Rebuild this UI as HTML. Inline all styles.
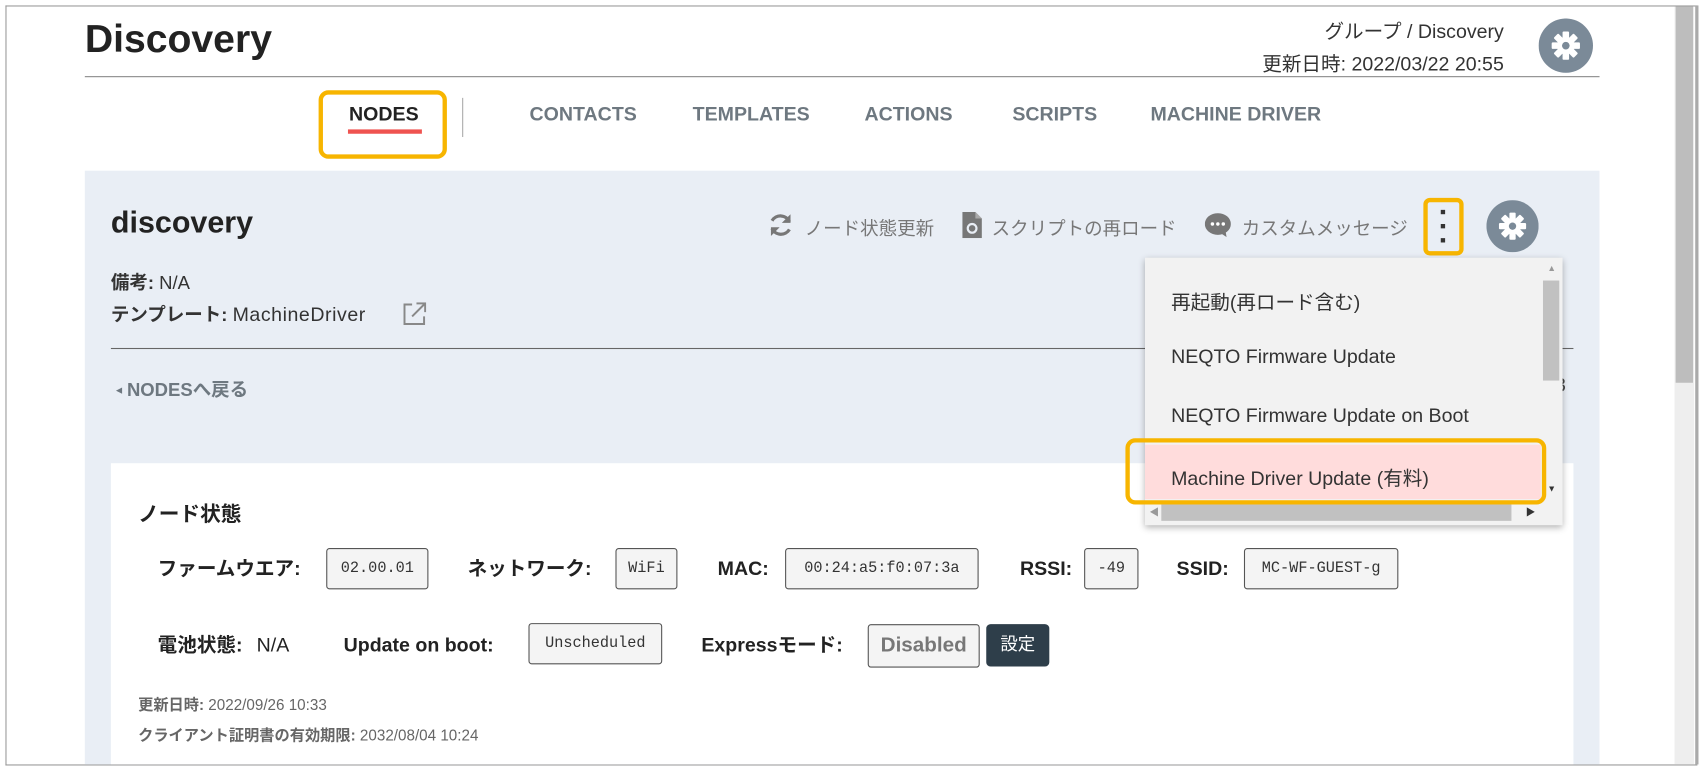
<!DOCTYPE html>
<html><head><meta charset="utf-8"><style>
html,body{margin:0;padding:0;width:1705px;height:770px;overflow:hidden;background:#fff}
#s{position:absolute;left:0;top:0;width:1568px;height:708px;transform:scale(1.08737);transform-origin:0 0;font-family:"Liberation Sans","Noto Sans CJK JP",sans-serif;color:#333}
.a{position:absolute;white-space:nowrap}
.b{font-weight:bold}
.tab{position:absolute;top:95px;font-size:18px;font-weight:bold;color:#6e7880}
.box{position:absolute;border:1px solid #555;border-radius:3px;background:#f4f4f4;font-family:"Liberation Mono",monospace;font-size:14px;color:#333;text-align:center;line-height:36px;height:36px}
.lbl{position:absolute;font-size:18px;font-weight:bold;color:#222;line-height:38px;height:38px}
.act{position:absolute;top:196px;font-size:17px;color:#777}
.item{position:absolute;left:1077px;font-size:18px;color:#333}
</style></head><body><div id="s">
<div class="a" style="left:5px;top:5px;width:1555px;height:697px;border:1px solid #999;border-right:none"></div>
<div class="a" style="left:1540px;top:6px;width:18px;height:697px;background:#eee"></div>
<div class="a" style="left:1541px;top:6px;width:16px;height:346px;background:#bdbdbd"></div>
<div class="a" style="left:1559px;top:5px;width:3px;height:698px;background:#aaa"></div>

<div class="a b" style="left:78px;top:15px;font-size:36px;color:#222">Discovery</div>
<div class="a" style="right:185px;top:15px;font-size:18px;color:#333">グループ / Discovery</div>
<div class="a" style="right:185px;top:45px;font-size:18px;color:#333">更新日時: 2022/03/22 20:55</div>
<svg class="a" style="left:1415px;top:17px" width="50" height="50" viewBox="0 0 50 50"><circle cx="25" cy="25" r="25" fill="#7b8a98"/><g fill="#fff" transform="translate(25 25)"><circle r="8"/><g id="t"><rect x="-3" y="-13" width="6" height="7" rx="1"/></g><use href="#t" transform="rotate(45)"/><use href="#t" transform="rotate(90)"/><use href="#t" transform="rotate(135)"/><use href="#t" transform="rotate(180)"/><use href="#t" transform="rotate(225)"/><use href="#t" transform="rotate(270)"/><use href="#t" transform="rotate(315)"/><circle r="3.5" fill="#7b8a98"/></g></svg>
<div class="a" style="left:78px;top:70px;width:1393px;height:1px;background:#888"></div>

<div class="tab" style="left:321px;color:#222">NODES</div>
<div class="a" style="left:320px;top:119px;width:68px;height:4px;background:#ef5350"></div>
<div class="a" style="left:293px;top:83px;width:110px;height:55px;border:4px solid #f7b500;border-radius:9px"></div>
<div class="a" style="left:425px;top:90px;width:1px;height:36px;background:#aaa"></div>
<div class="tab" style="left:487px">CONTACTS</div>
<div class="tab" style="left:637px">TEMPLATES</div>
<div class="tab" style="left:795px">ACTIONS</div>
<div class="tab" style="left:931px">SCRIPTS</div>
<div class="tab" style="left:1058px">MACHINE DRIVER</div>

<div class="a" style="left:78px;top:157px;width:1393px;height:546px;background:#e9eef5"></div>
<div class="a b" style="left:102px;top:189px;font-size:28px;color:#222">discovery</div>
<svg class="a" style="left:706px;top:195px" width="24" height="24" viewBox="0 0 24 24"><path d="M20 9A9 9 0 0 0 4 8M4 15a9 9 0 0 0 16 1" stroke="#777" stroke-width="3" fill="none"/><path d="M21 2v8h-8zM3 22v-8h8z" fill="#777"/></svg>
<div class="act" style="left:740px">ノード状態更新</div>
<svg class="a" style="left:885px;top:195px" width="18" height="24" viewBox="0 0 18 24"><path d="M0 0h12l6 6v18H0z" fill="#777"/><path d="M12 0v6h6" fill="#aaa"/><circle cx="9" cy="15" r="4" stroke="#e9eef5" stroke-width="2" fill="none"/></svg>
<div class="act" style="left:912px">スクリプトの再ロード</div>
<svg class="a" style="left:1108px;top:196px" width="24" height="22" viewBox="0 0 24 22"><ellipse cx="12" cy="10" rx="12" ry="10" fill="#777"/><path d="M14 18l6 4-1-6z" fill="#777"/><circle cx="7" cy="10" r="1.6" fill="#fff"/><circle cx="12" cy="10" r="1.6" fill="#fff"/><circle cx="17" cy="10" r="1.6" fill="#fff"/></svg>
<div class="act" style="left:1142px">カスタムメッセージ</div>
<div class="a" style="left:1309px;top:182px;width:29px;height:45px;border:4px solid #f7b500;border-radius:6px"></div>
<div class="a" style="left:1325px;top:193px;width:4px;height:4px;background:#333"></div>
<div class="a" style="left:1325px;top:206px;width:4px;height:4px;background:#333"></div>
<div class="a" style="left:1325px;top:219px;width:4px;height:4px;background:#333"></div>
<svg class="a" style="left:1367px;top:184px" width="48" height="48" viewBox="0 0 50 50"><circle cx="25" cy="25" r="25" fill="#7b8a98"/><g fill="#fff" transform="translate(25 25)"><circle r="8"/><use href="#t"/><use href="#t" transform="rotate(45)"/><use href="#t" transform="rotate(90)"/><use href="#t" transform="rotate(135)"/><use href="#t" transform="rotate(180)"/><use href="#t" transform="rotate(225)"/><use href="#t" transform="rotate(270)"/><use href="#t" transform="rotate(315)"/><circle r="3.5" fill="#7b8a98"/></g></svg>

<div class="a" style="left:102px;top:246px;font-size:17px"><b>備考:</b> N/A</div>
<div class="a" style="left:102px;top:275px;font-size:17px"><b>テンプレート:</b> <span style="letter-spacing:0.5px;font-size:18px">MachineDriver</span></div>
<svg class="a" style="left:370px;top:278px" width="22" height="22" viewBox="0 0 22 22"><path d="M9 2H2v18h18v-7M13 1h8v8M21 1L9 13" stroke="#888" stroke-width="1.8" fill="none"/></svg>
<div class="a" style="left:102px;top:320px;width:1345px;height:1px;background:#666"></div>
<div class="a b" style="left:107px;top:344px;font-size:17px;color:#6e7880"><span style="font-size:10px;vertical-align:2px">◂</span> NODESへ戻る</div>
<div class="a" style="left:1430px;top:344px;font-size:18px;color:#444">3</div>

<div class="a" style="left:102px;top:426px;width:1345px;height:277px;background:#fff"></div>
<div class="a b" style="left:127px;top:458px;font-size:19px;color:#222">ノード状態</div>
<div class="lbl" style="left:145px;top:504px">ファームウエア:</div><div class="box" style="left:300px;top:504px;width:92px">02.00.01</div>
<div class="lbl" style="left:430px;top:504px">ネットワーク:</div><div class="box" style="left:566px;top:504px;width:55px">WiFi</div>
<div class="lbl" style="left:660px;top:504px">MAC:</div><div class="box" style="left:722px;top:504px;width:176px">00:24:a5:f0:07:3a</div>
<div class="lbl" style="left:938px;top:504px">RSSI:</div><div class="box" style="left:997px;top:504px;width:48px">-49</div>
<div class="lbl" style="left:1082px;top:504px">SSID:</div><div class="box" style="left:1144px;top:504px;width:140px">MC-WF-GUEST-g</div>
<div class="lbl" style="left:145px;top:574px">電池状態: <span style="font-weight:normal;margin-left:8px">N/A</span></div>
<div class="lbl" style="left:316px;top:574px">Update on boot:</div><div class="box" style="left:486px;top:573px;width:121px">Unscheduled</div>
<div class="lbl" style="left:645px;top:574px">Expressモード:</div>
<div class="box" style="left:798px;top:574px;width:101px;font-family:'Liberation Sans',sans-serif;font-weight:bold;font-size:19px;color:#777;line-height:38px;height:38px">Disabled</div>
<div class="a" style="left:907px;top:574px;width:58px;height:39px;background:#2e3e4a;border-radius:4px;color:#fff;font-size:16px;text-align:center;line-height:39px">設定</div>
<div class="a" style="left:127px;top:638px;font-size:14px;color:#666"><b>更新日時:</b> 2022/09/26 10:33</div>
<div class="a" style="left:127px;top:666px;font-size:14px;color:#666"><b>クライアント証明書の有効期限:</b> 2032/08/04 10:24</div>

<div class="a" style="left:1053px;top:237px;width:384px;height:246px;background:#f2f2f2;box-shadow:0 2px 6px rgba(0,0,0,.3)"></div>
<div class="a" style="left:1418px;top:240px;width:18px;height:220px;background:#f2f2f2"></div>
<div class="a" style="left:1419px;top:258px;width:15px;height:92px;background:#c1c1c1"></div>
<div class="a" style="left:1423px;top:242px;font-size:8px;color:#999">▲</div>
<div class="a" style="left:1423px;top:445px;font-size:8px;color:#333">▼</div>
<div class="a" style="left:1068px;top:464px;width:322px;height:15px;background:#c1c1c1"></div>
<div class="a" style="left:1057px;top:464px;font-size:9px;color:#999">◀</div>
<div class="a" style="left:1403px;top:464px;font-size:9px;color:#333">▶</div>
<div class="item" style="top:264px">再起動(再ロード含む)</div>
<div class="item" style="top:318px">NEQTO Firmware Update</div>
<div class="item" style="top:372px">NEQTO Firmware Update on Boot</div>
<div class="a" style="left:1053px;top:409px;width:364px;height:50px;background:#ffdcdc"></div>
<div class="a" style="left:1035px;top:403px;width:379px;height:53px;border:4px solid #f7b500;border-radius:9px"></div>
<div class="item" style="top:426px">Machine Driver Update (有料)</div>
</div></body></html>
